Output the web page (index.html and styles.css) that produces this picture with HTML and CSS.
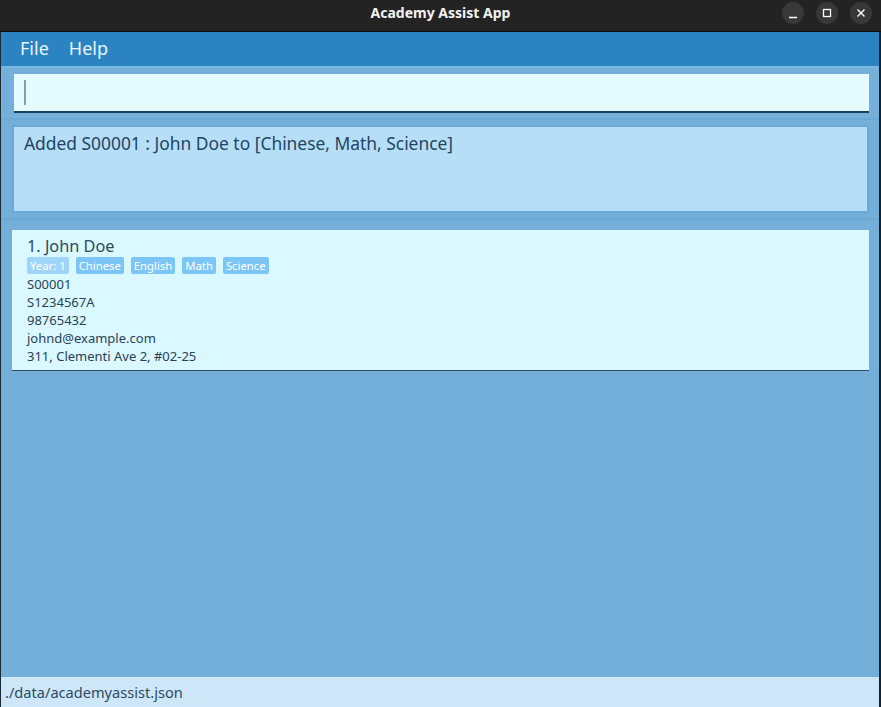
FILE: index.html
```html
<!DOCTYPE html>
<html>
<head>
<meta charset="utf-8">
<link rel="stylesheet" href="styles.css">
</head>
<body>
<div class="window">
  <div class="titlebar">
    <div class="title">Academy Assist App</div>
    <div class="controls">
      <div class="ctl"><svg width="22" height="22" viewBox="0 0 22 22"><path d="M7 15.5h8" stroke="#fff" stroke-width="1.5"/></svg></div>
      <div class="ctl"><svg width="22" height="22" viewBox="0 0 22 22"><rect x="7.5" y="7.5" width="7" height="7" fill="none" stroke="#fff" stroke-width="1.3"/></svg></div>
      <div class="ctl"><svg width="22" height="22" viewBox="0 0 22 22"><path d="M7.5 7.5l7 7M14.5 7.5l-7 7" stroke="#fff" stroke-width="1.4"/></svg></div>
    </div>
  </div>
  <div class="frame">
    <div class="menubar">
      <span class="menu">File</span>
      <span class="menu">Help</span>
    </div>
    <div class="cmd-pane">
      <div class="cmd-box"><span class="caret"></span></div>
    </div>
    <div class="result-pane">
      <div class="result-box">Added S00001 : John Doe to [Chinese, Math, Science]</div>
    </div>
    <div class="list-pane">
      <div class="card">
        <div class="name">1. John Doe</div>
        <div class="tags">
          <span class="tag year">Year: 1</span>
          <span class="tag">Chinese</span>
          <span class="tag">English</span>
          <span class="tag">Math</span>
          <span class="tag">Science</span>
        </div>
        <div class="field">S00001</div>
        <div class="field">S1234567A</div>
        <div class="field">98765432</div>
        <div class="field">johnd@example.com</div>
        <div class="field">311, Clementi Ave 2, #02-25</div>
      </div>
    </div>
    <div class="status">./data/academyassist.json</div>
  </div>
</div>
</body>
</html>
```
FILE: styles.css
```css
* { box-sizing: border-box; }
html, body { margin: 0; padding: 0; }
body {
  width: 881px;
  height: 707px;
  overflow: hidden;
  font-family: "Noto Sans", "Open Sans", sans-serif;
  background: #1b1b1b;
}
.window {
  width: 881px;
  height: 707px;
  display: flex;
  flex-direction: column;
}
.titlebar {
  height: 32px;
  background: #232323;
  border-bottom: 1px solid #0a0a0a;
  position: relative;
  display: flex;
  align-items: center;
  justify-content: center;
}
.title {
  color: #f2f2f2;
  font-family: "Noto Sans", sans-serif;
  font-weight: 700;
  font-size: 14px;
  margin-top: -6px;
}
.controls {
  position: absolute;
  right: 9px;
  top: 2px;
  display: flex;
  gap: 12px;
}
.ctl {
  width: 22px;
  height: 22px;
  border-radius: 50%;
  background: #383838;
}
.ctl svg { display: block; }
.frame {
  flex: 1;
  display: flex;
  flex-direction: column;
  border-left: 1px solid #1c2a33;
  border-right: 2px solid #15202a;
  background: #72afd9;
}
.menubar {
  height: 34px;
  background: #2b84c1;
  display: flex;
  align-items: center;
  padding-left: 19px;
  gap: 20px;
}
.menu {
  color: #eaf5fc;
  font-size: 18px;
  padding-bottom: 2px;
}
.cmd-pane {
  padding: 8px 10px 5px 13px;
  background: #75b0da;
  border-bottom: 2px solid #6aaad7;
  border-top: 2px solid #7db7df;
}
.cmd-box {
  height: 39px;
  background: #e6fbff;
  border-bottom: 2px solid #17425f;
  padding: 6px 10px;
  margin-top: -2px;
}
.caret {
  display: block;
  width: 2px;
  height: 25px;
  background: #7f9fb2;
}
.result-pane {
  padding: 5px 10px 5px 11px;
  background: #73afd9;
  border-bottom: 2px solid #6aaad6;
}
.result-box {
  height: 88px;
  background: #b6dff7;
  border: 2px solid #68a9d8;
  color: #1e4563;
  font-size: 17.4px;
  padding: 4px 10px;
}
.list-pane {
  flex: 1;
  padding: 10px 10px 0 11px;
  background: #73afd9;
}
.card {
  height: 141px;
  background: #daf8ff;
  border-bottom: 1px solid #2c4b60;
  padding: 5px 15px;
  color: #2a4255;
}
.name {
  font-size: 16.3px;
  line-height: 22px;
  color: #2c4a60;
}
.tags {
  display: flex;
  gap: 7px;
  height: 17px;
  margin-bottom: 1px;
}
.tag {
  background: #7bc6f7;
  color: #ffffff;
  font-size: 11.3px;
  line-height: 17px;
  padding: 0 3px;
  border-radius: 2px;
}
.tag.year { background: #a0d5fa; }
.field {
  font-size: 13px;
  line-height: 18px;
}
.status {
  height: 30px;
  background: #cde7f9;
  color: #2b4a62;
  font-size: 14.6px;
  padding: 5px 4px;
  line-height: 20px;
}
```
